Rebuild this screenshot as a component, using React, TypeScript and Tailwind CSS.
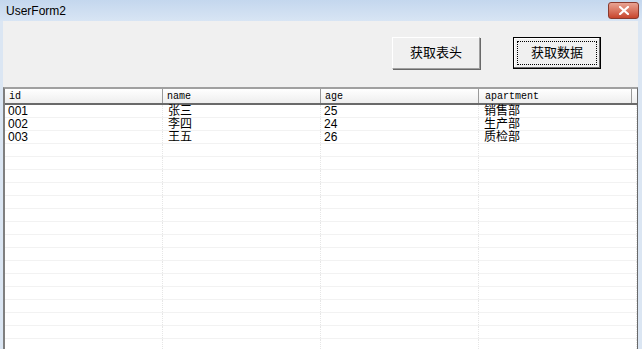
const COLS = ["id", "name", "age", "apartment"];
const ROWS = [
  ["001", "张三", "25", "销售部"],
  ["002", "李四", "24", "生产部"],
  ["003", "王五", "26", "质检部"],
];
const EMPTY = Array.from({ length: 16 });

const cjk = { fontFamily: '"Liberation Sans", "Noto Sans CJK SC", sans-serif' };
const mono = { fontFamily: '"Liberation Mono", "DejaVu Sans Mono", monospace' };

function Btn({ label, focused }: { label: string; focused?: boolean }) {
  return (
    <div
      className={`h-[32px] w-[88px] bg-[#f0f0f0] flex items-center justify-center text-[13px] text-black ${
        focused
          ? "border border-black shadow-[inset_-1px_-1px_0_#696969,inset_1px_1px_0_#fff]"
          : "border-t border-l border-white border-r border-b border-r-[#a0a0a0] border-b-[#a0a0a0] shadow-[1px_1px_0_#696969]"
      }`}
      style={cjk}
    >
      {focused ? (
        <div className="w-[80px] h-[24px] border border-dotted border-black flex items-center justify-center">
          {label}
        </div>
      ) : (
        label
      )}
    </div>
  );
}

export default function App() {
  return (
    <div className="w-[642px] h-[349px] overflow-hidden flex flex-col bg-[#dbe6f3]">
      <div className="h-[21px] shrink-0 flex items-center justify-between bg-gradient-to-b from-[#c4d7ee] to-[#d8e5f4] pl-[6px] pr-[3px]">
        <span className="text-[12px] text-black" style={cjk}>UserForm2</span>
        <div className="w-[31px] h-[17px] rounded-[3px] border border-[#8a3a2e] bg-gradient-to-b from-[#e8a393] to-[#c7432b] flex items-center justify-center">
          <svg width="10" height="9" viewBox="0 0 10 9">
            <path d="M1 1 L9 8 M9 1 L1 8" stroke="#fff" strokeWidth="2.2" strokeLinecap="square" />
          </svg>
        </div>
      </div>
      <div className="flex-1 flex pl-[3px] pr-[8px]">
        <div className="flex-1 flex flex-col bg-[#f0f0f0]">
          <div className="h-[66px] shrink-0 flex items-start justify-end gap-[33px] pt-[16px] pr-[37px]">
            <Btn label="获取表头" />
            <Btn label="获取数据" focused />
          </div>
          <div className="flex-1 flex flex-col bg-white border-l-2 border-t-2 border-r border-l-[#7f7f7f] border-t-[#a0a0a0] border-r-[#696969] overflow-hidden">
            <div className="h-[16px] shrink-0 flex border-b-2 border-b-[#696969] bg-gradient-to-b from-white to-[#eeeeee]">
              {COLS.map((c, i) => (
                <div
                  key={c}
                  className={`shrink-0 h-full flex items-center pl-[4px] text-[10px] text-black border-r border-r-[#9a9a9a] ${
                    i === 3 ? "w-[153px] pl-[6px]" : "w-[158px]"
                  }`}
                  style={mono}
                >
                  {c}
                </div>
              ))}
            </div>
            {ROWS.map((r, ri) => (
              <div key={ri} className="h-[13px] shrink-0 flex border-b border-b-[#f2f2f2]">
                {r.map((v, i) => (
                  <div
                    key={i}
                    className={`w-[158px] shrink-0 h-full flex items-center pl-[3px] text-[12px] leading-[12px] text-black border-r border-dotted border-r-[#e6e6e6] ${
                      i === 1 || i === 3 ? "pl-[5px]" : ""
                    }`}
                    style={cjk}
                  >
                    {v}
                  </div>
                ))}
              </div>
            ))}
            {EMPTY.map((_, ri) => (
              <div key={ri} className="h-[13px] shrink-0 flex border-b border-b-[#f2f2f2]">
                {COLS.map((c) => (
                  <div key={c} className="w-[158px] shrink-0 h-full border-r border-dotted border-r-[#e6e6e6]" />
                ))}
              </div>
            ))}
          </div>
        </div>
      </div>
    </div>
  );
}
